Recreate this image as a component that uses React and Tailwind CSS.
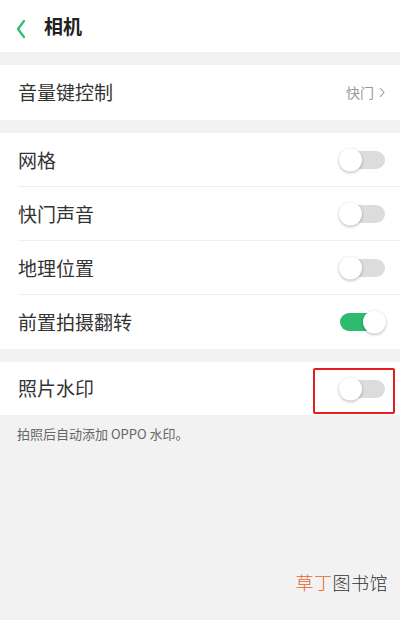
import React from 'react';

const font = { fontFamily: '"Noto Sans CJK SC", "Noto Sans", sans-serif' };

const Toggle = ({ on }) => (
  <div className={`relative w-[45px] h-[18px] rounded-full ${on ? 'bg-[#2dbb6f]' : 'bg-[#dcdcdc]'}`}>
    <div
      className={`absolute top-1/2 -translate-y-1/2 w-[23px] h-[23px] rounded-full bg-white shadow-[0_1px_3px_rgba(0,0,0,0.3)] ${on ? 'right-[-1px]' : 'left-[-1px]'}`}
    />
  </div>
);

const Row = ({ label, on, border }) => (
  <div className="flex items-center justify-between h-[54px] pl-[18px] pr-[15px] bg-white relative">
    <span className="text-[19px] text-[#333]">{label}</span>
    <Toggle on={on} />
    {border && <div className="absolute bottom-0 left-[18px] right-0 h-px bg-[#efefef]" />}
  </div>
);

const App = () => {
  return (
    <div className="w-[400px] h-[620px] bg-[#f2f2f2] overflow-hidden relative" style={font}>
      {/* Header */}
      <div className="flex items-center h-[52px] bg-white pl-[16px]">
        <svg width="10" height="20" viewBox="0 0 10 20" className="mr-[18px] mt-[6px]">
          <path d="M8 2 L2 10 L8 18" fill="none" stroke="#2dbb6f" strokeWidth="2.2" strokeLinecap="round" strokeLinejoin="round" />
        </svg>
        <span className="text-[19px] font-bold text-[#222]">相机</span>
      </div>

      <div className="h-[13px]" />

      <div className="flex items-center justify-between h-[55px] pl-[18px] pr-[15px] bg-white">
        <span className="text-[19px] text-[#333]">音量键控制</span>
        <span className="text-[14px] text-[#999] flex items-center gap-[5px]">
          快门
          <svg width="6" height="11" viewBox="0 0 6 11">
            <path d="M1 1 L5 5.5 L1 10" fill="none" stroke="#999" strokeWidth="1.1" />
          </svg>
        </span>
      </div>

      <div className="h-[13px]" />

      <Row label="网格" on={false} border />
      <Row label="快门声音" on={false} border />
      <Row label="地理位置" on={false} border />
      <Row label="前置拍摄翻转" on={true} />

      <div className="h-[13px]" />

      <div className="flex items-center justify-between h-[53px] pl-[18px] pr-[15px] bg-white relative">
        <span className="text-[19px] text-[#333]">照片水印</span>
        <Toggle on={false} />
        <div className="absolute right-[5px] top-[6px] w-[82px] h-[46px] border-2 border-[#e02020] rounded-[2px]" />
      </div>

      <div className="pl-[17px] pt-[9px] text-[13px] text-[#666]">拍照后自动添加 OPPO 水印。</div>

      <div className="absolute right-[12px] bottom-[24px] text-[18px] font-light tracking-[0.5px]">
        <span className="text-[#e8642a]">草丁</span>
        <span className="text-[#333]">图书馆</span>
      </div>
    </div>
  );
};

export default App;
